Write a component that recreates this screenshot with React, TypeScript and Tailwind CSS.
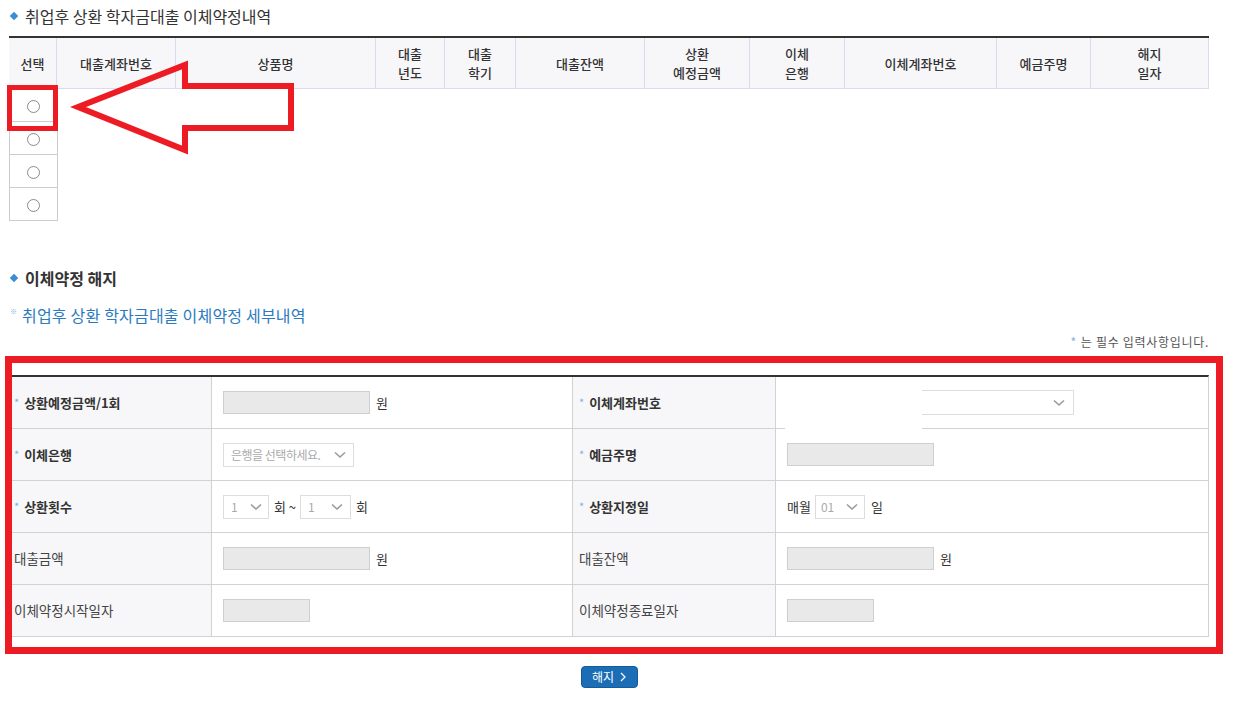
import React from "react";

const headCols: string[][] = [
  ["선택"],
  ["대출계좌번호"],
  ["상품명"],
  ["대출", "년도"],
  ["대출", "학기"],
  ["대출잔액"],
  ["상환", "예정금액"],
  ["이체", "은행"],
  ["이체계좌번호"],
  ["예금주명"],
  ["해지", "일자"],
];

const Diamond = () => (
  <span className="inline-block w-[6px] h-[6px] bg-[#3a8dd3] rotate-45 mr-[8px] ml-[2px]" />
);

const Chevron = () => (
  <svg width="12" height="8" viewBox="0 0 12 8" className="shrink-0">
    <path d="M1 1.5 L6 6 L11 1.5" fill="none" stroke="#9a9a9a" strokeWidth="1.6" />
  </svg>
);

const Star = () => <span className="text-[#7fb0e3] text-[11px] mr-[5px] leading-none font-normal">*</span>;

const GrayInput = ({ w }: { w: string }) => (
  <div className={`${w} h-[23px] border border-[#cfcfcf] bg-[#e9e9e9]`} />
);

const Label = ({ text, req, right }: { text: string; req?: boolean; right?: boolean }) => (
  <div
    className={`flex items-center bg-[#f7f7f9] border-r border-b border-[#d2d2d2] ${
      right ? "pl-[6px] border-l" : "pl-[2px]"
    } ${req ? "font-bold text-[13px] text-[#333]" : "text-[13.5px] text-[#444]"}`}
  >
    {req && <Star />}
    {text}
  </div>
);

const Value = ({ children }: { children?: React.ReactNode }) => (
  <div className="relative flex items-center pl-[11px] border-b border-[#d2d2d2] text-[13px] text-[#333]">
    {children}
  </div>
);

export default function App() {
  return (
    <div className="relative w-[1243px] min-h-[715px] bg-white text-[#333] font-['Noto_Sans_CJK_KR','Noto_Sans',sans-serif]">
      {/* section 1 */}
      <div className="ml-[9px] pt-[6px] w-[1200px]">
        <h3 className="flex items-center h-[20px] text-[16px] text-[#333]">
          <Diamond />
          취업후 상환 학자금대출 이체약정내역
        </h3>

        <div className="mt-[10px] border-t-2 border-[#333]">
          <div className="grid grid-cols-[48px_119px_200px_69px_71px_129px_105px_95px_152px_94px_118px] h-[51px] bg-[#f7f7fa] border-b border-[#dcdaf0]">
            {headCols.map((lines, i) => (
              <div
                key={i}
                className="flex flex-col items-center justify-center border-r border-[#dcdaf0] text-[13px] leading-[19px] font-medium text-[#333]"
              >
                {lines.map((l) => (
                  <span key={l}>{l}</span>
                ))}
              </div>
            ))}
          </div>
          <div className="flex flex-col">
            {[0, 1, 2, 3].map((r) => (
              <div
                key={r}
                className="w-[49px] h-[33px] pt-[3px] flex items-center justify-center border-l border-r border-b border-[#cccccc]"
              >
                <span className="w-[13px] h-[13px] rounded-full border border-[#8a8a8a] bg-white" />
              </div>
            ))}
          </div>
        </div>
      </div>

      {/* section 2 */}
      <div className="ml-[9px] w-[1200px]">
        <h3 className="mt-[47px] flex items-center h-[20px] text-[16px] font-bold text-[#333]">
          <Diamond />
          이체약정 해지
        </h3>
        <p className="mt-[17px] flex items-center h-[20px] text-[16px] tracking-[0.2px] text-[#2a7bbf]">
          <span className="text-[7px] tracking-normal text-[#7fb0e3] self-start mt-[1px] ml-[1px] mr-[5px]">※</span>
          취업후 상환 학자금대출 이체약정 세부내역
        </p>
        <p className="mt-[9px] h-[16px] flex items-center justify-end text-[12px] tracking-[0.7px] text-[#555]">
          <span className="text-[#7fb0e3] mr-[4px]">*</span>는 필수 입력사항입니다.
        </p>
      </div>

      <div className="mt-[6px] ml-[5px] w-[1218px] border-[7px] border-[#ed1c24] pt-[12px] pb-[10px] pr-[7px]">
        <div className="w-[1197px] border-t-2 border-[#333] border-r border-r-[#d2d2d2] grid grid-cols-[200px_360px_204px_433px] auto-rows-[52px]">
          <Label text="상환예정금액/1회" req />
          <Value>
            <GrayInput w="w-[147px]" />
            <span className="ml-[6px]">원</span>
          </Value>
          <Label text="이체계좌번호" req right />
          <Value>
            <div className="w-[287px] h-[25px] border border-[#dddddd] bg-white flex items-center justify-end pr-[8px]">
              <Chevron />
            </div>
            <div className="absolute left-[9px] top-[4px] w-[137px] h-[48px] bg-white" />
          </Value>

          <Label text="이체은행" req />
          <Value>
            <div className="w-[131px] h-[24px] border border-[#dddddd] flex items-center justify-between pl-[7px] pr-[7px] text-[12px] tracking-[-0.5px] text-[#aaa]">
              은행을 선택하세요.
              <Chevron />
            </div>
          </Value>
          <Label text="예금주명" req right />
          <Value>
            <GrayInput w="w-[147px]" />
          </Value>

          <Label text="상환횟수" req />
          <Value>
            <div className="w-[46px] h-[24px] border border-[#dddddd] flex items-center justify-between pl-[7px] pr-[6px] text-[12px] text-[#aaa]">
              1
              <Chevron />
            </div>
            <span className="ml-[5px] mr-[4px]">회 ~</span>
            <div className="w-[51px] h-[24px] border border-[#dddddd] flex items-center justify-between pl-[7px] pr-[7px] text-[12px] text-[#aaa]">
              1
              <Chevron />
            </div>
            <span className="ml-[5px]">회</span>
          </Value>
          <Label text="상환지정일" req right />
          <Value>
            <span className="mr-[4px]">매월</span>
            <div className="w-[50px] h-[24px] border border-[#dddddd] flex items-center justify-between pl-[5px] pr-[6px] text-[12px] text-[#aaa]">
              01
              <Chevron />
            </div>
            <span className="ml-[6px]">일</span>
          </Value>

          <Label text="대출금액" />
          <Value>
            <GrayInput w="w-[147px]" />
            <span className="ml-[6px]">원</span>
          </Value>
          <Label text="대출잔액" right />
          <Value>
            <GrayInput w="w-[147px]" />
            <span className="ml-[6px]">원</span>
          </Value>

          <Label text="이체약정시작일자" />
          <Value>
            <GrayInput w="w-[87px]" />
          </Value>
          <Label text="이체약정종료일자" right />
          <Value>
            <GrayInput w="w-[87px]" />
          </Value>
        </div>
      </div>

      <div className="ml-[9px] w-[1200px] mt-[12px] flex justify-center">
        <button className="w-[57px] h-[22px] rounded-[4px] bg-[#1b6db6] border border-[#135b9c] text-white text-[12px] flex items-center justify-center gap-[6px]">
          해지
          <svg width="6" height="10" viewBox="0 0 6 10">
            <path d="M1 1 L5 5 L1 9" fill="none" stroke="#fff" strokeWidth="1.2" />
          </svg>
        </button>
      </div>

      {/* annotation: red box around first radio */}
      <div className="absolute left-[7px] top-[85px] w-[51px] h-[46px] border-[5px] border-[#ed1c24]" />
      {/* annotation: red arrow */}
      <svg className="absolute left-[70px] top-[58px]" width="230" height="100" viewBox="0 0 230 100">
        <polygon
          points="8,49 115,7 115,28 221,28 221,70 115,70 115,92"
          fill="none"
          stroke="#ed1c24"
          strokeWidth="6"
          strokeLinejoin="miter"
        />
      </svg>
    </div>
  );
}
